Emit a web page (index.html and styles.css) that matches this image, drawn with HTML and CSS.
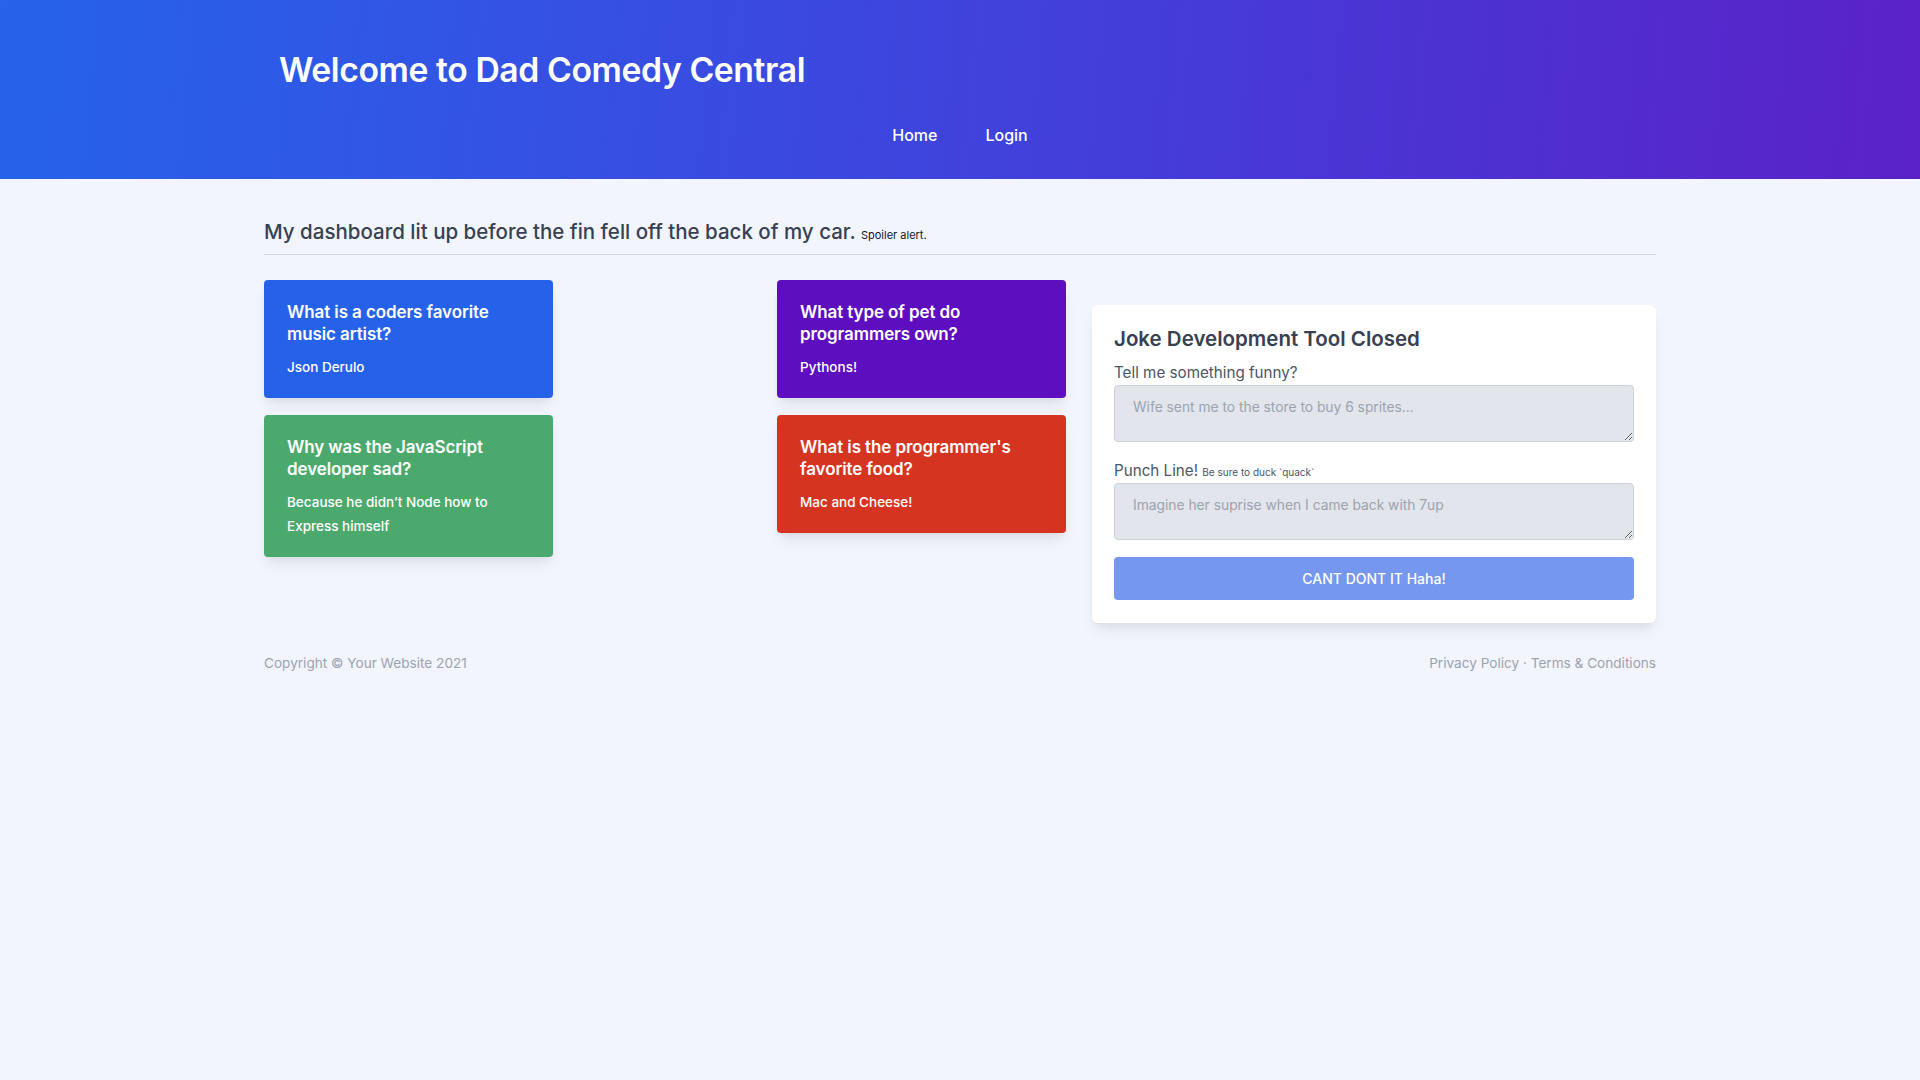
FILE: index.html
```html
<!DOCTYPE html>
<html lang="en">
<head>
<meta charset="utf-8">
<title>Dad Comedy Central</title>
<link rel="stylesheet" href="styles.css">
</head>
<body>
<header class="hero">
  <h1 class="hero-title">Welcome to Dad Comedy Central</h1>
  <nav class="nav">
    <a class="nav-link" href="#">Home</a>
    <a class="nav-link" href="#">Login</a>
  </nav>
</header>
<main class="container">
  <h2 class="dash-title">My dashboard lit up before the fin fell off the back of my car. <small class="dash-small">Spoiler alert.</small></h2>
  <div class="content">
    <div class="jokes">
      <div class="joke joke-blue">
        <h3 class="joke-q">What is a coders favorite music artist?</h3>
        <p class="joke-a">Json Derulo</p>
      </div>
      <div class="spacer"></div>
      <div class="joke joke-purple">
        <h3 class="joke-q">What type of pet do programmers own?</h3>
        <p class="joke-a">Pythons!</p>
      </div>
      <div class="joke joke-green">
        <h3 class="joke-q">Why was the JavaScript developer sad?</h3>
        <p class="joke-a">Because he didn’t Node how to Express himself</p>
      </div>
      <div class="spacer"></div>
      <div class="joke joke-red">
        <h3 class="joke-q">What is the programmer's favorite food?</h3>
        <p class="joke-a">Mac and Cheese!</p>
      </div>
    </div>
    <form class="tool">
      <h3 class="tool-title">Joke Development Tool Closed</h3>
      <label class="tool-label">Tell me something funny?</label>
      <textarea class="tool-input" placeholder="Wife sent me to the store to buy 6 sprites..."></textarea>
      <label class="tool-label tool-label-2">Punch Line! <small class="tool-hint">Be sure to duck `quack`</small></label>
      <textarea class="tool-input" placeholder="Imagine her suprise when I came back with 7up"></textarea>
      <button type="button" class="tool-btn">CANT DONT IT Haha!</button>
    </form>
  </div>
  <footer class="footer">
    <span>Copyright © Your Website 2021</span>
    <span>Privacy Policy · Terms &amp; Conditions</span>
  </footer>
</main>
</body>
</html>
```
FILE: styles.css
```css
* { box-sizing: border-box; }
body {
  margin: 0;
  background: #f2f5fd;
  font-family: Inter, "Liberation Sans", sans-serif;
  color: #374151;
}
.hero {
  height: 179px;
  padding-top: 48px;
  background: linear-gradient(95deg, #2663ea 0%, #3a4ae0 40%, #5a21c8 100%);
  color: #fff;
}
.hero-title {
  margin: 0;
  padding-left: 279px;
  font-size: 33.7px;
  line-height: 44px;
  font-weight: 600;
  letter-spacing: -0.4px;
}
.nav {
  display: flex;
  justify-content: center;
  gap: 48px;
  margin-top: 31px;
}
.nav-link {
  color: #fff;
  text-decoration: none;
  font-size: 16px;
  font-weight: 500;
  line-height: 24px;
}
.container {
  width: 1392px;
  margin: 0 auto;
}
.dash-title {
  margin: 0;
  padding-top: 38px;
  padding-bottom: 4px;
  font-size: 20.5px;
  line-height: 30px;
  font-weight: 500;
  color: #374151;
  border-bottom: 1px solid #d1d5db;
}
.dash-small {
  font-size: 11px;
  font-weight: 400;
  color: #111827;
}
.content {
  display: flex;
  gap: 26px;
  margin-top: 25px;
  align-items: flex-start;
}
.jokes {
  flex: 0 0 802px;
  display: grid;
  grid-template-columns: 289px 1fr 289px;
  row-gap: 17px;
  align-items: start;
}
.joke {
  border-radius: 4px;
  padding: 21px 23px 19px;
  color: #fff;
  box-shadow: 0 10px 15px -3px rgba(0,0,0,0.08), 0 4px 6px -2px rgba(0,0,0,0.04);
}
.joke-blue { background: #2662e9; }
.joke-purple { background: #5d0ebe; }
.joke-green { background: #4ca96e; }
.joke-red { background: #d53420; }
.joke-q {
  margin: 0;
  font-size: 17px;
  line-height: 22px;
  font-weight: 600;
  letter-spacing: -0.1px;
}
.joke-a {
  margin: 10px 0 0;
  font-size: 13.5px;
  line-height: 24px;
  font-weight: 500;
}
.tool {
  flex: 1;
  margin-top: 25px;
  background: #fff;
  border-radius: 6px;
  padding: 20px 22px 23px;
  box-shadow: 0 10px 15px -3px rgba(0,0,0,0.08), 0 4px 6px -2px rgba(0,0,0,0.04);
  display: flex;
  flex-direction: column;
}
.tool-title {
  margin: 0;
  font-size: 20.5px;
  line-height: 28px;
  font-weight: 600;
  color: #374151;
}
.tool-label {
  display: block;
  margin-top: 10px;
  font-size: 15.2px;
  line-height: 20px;
  color: #4b5563;
}
.tool-label-2 { margin-top: 19px; }
.tool-hint {
  font-size: 10px;
  line-height: 1;
  color: #4b5563;
}
.tool-input {
  display: block;
  margin-top: 2px;
  height: 57px;
  width: 100%;
  background: #e2e5ec;
  border: 1px solid #cdd1d9;
  border-radius: 4px;
  padding: 13px 18px;
  font-family: inherit;
  font-size: 13.8px;
  color: #374151;
  resize: vertical;
}
.tool-input::placeholder { color: #9ca3af; }
.tool-btn {
  margin-top: 17px;
  height: 43px;
  border: 0;
  border-radius: 4px;
  background: #7597ef;
  color: #fff;
  font-family: inherit;
  font-size: 14px;
  font-weight: 500;
}
.footer {
  display: flex;
  justify-content: space-between;
  margin-top: 30px;
  font-size: 13.6px;
  line-height: 20px;
  color: #9ca3af;
}
```
